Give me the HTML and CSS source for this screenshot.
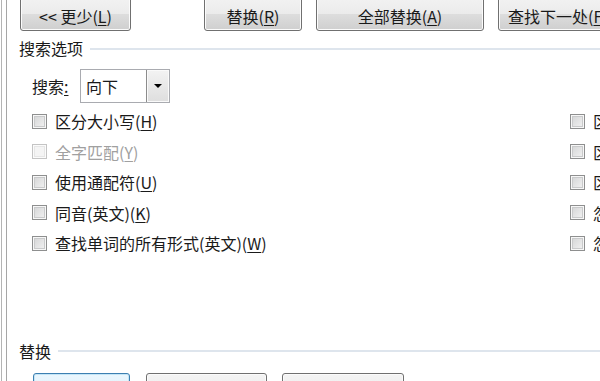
FILE: index.html
```html
<!DOCTYPE html>
<html lang="zh-CN">
<head>
<meta charset="utf-8">
<title>查找和替换</title>
<link rel="stylesheet" href="styles.css">
</head>
<body>
<div class="frame">
  <div class="panel">
    <div class="top-buttons">
      <button class="btn btn-less">&lt;&lt; 更少(<u>L</u>)</button>
      <button class="btn btn-replace">替换(<u>R</u>)</button>
      <button class="btn btn-all">全部替换(<u>A</u>)</button>
      <button class="btn btn-next">查找下一处(<u>F</u>)</button>
    </div>

    <div class="group-title">
      <span class="group-label">搜索选项</span>
      <span class="group-line"></span>
    </div>

    <div class="search-row">
      <span class="search-label">搜索<u>:</u></span>
      <div class="combo">
        <span class="combo-value">向下</span>
        <span class="combo-arrow"><span class="tri"></span></span>
      </div>
    </div>

    <div class="options">
      <div class="col col-left">
        <label class="opt"><span class="cb"></span><span>区分大小写(<u>H</u>)</span></label>
        <label class="opt disabled"><span class="cb"></span><span>全字匹配(<u>Y</u>)</span></label>
        <label class="opt"><span class="cb"></span><span>使用通配符(<u>U</u>)</span></label>
        <label class="opt"><span class="cb"></span><span>同音(英文)(<u>K</u>)</span></label>
        <label class="opt"><span class="cb"></span><span>查找单词的所有形式(英文)(<u>W</u>)</span></label>
      </div>
      <div class="col col-right">
        <label class="opt"><span class="cb"></span><span>区分前缀(<u>X</u>)</span></label>
        <label class="opt"><span class="cb"></span><span>区分后缀(<u>T</u>)</span></label>
        <label class="opt"><span class="cb"></span><span>区分全/半角(<u>M</u>)</span></label>
        <label class="opt"><span class="cb"></span><span>忽略标点符号(<u>S</u>)</span></label>
        <label class="opt"><span class="cb"></span><span>忽略空格(<u>W</u>)</span></label>
      </div>
    </div>

    <div class="group-title replace-title">
      <span class="group-label">替换</span>
      <span class="group-line"></span>
    </div>

    <div class="bottom-buttons">
      <button class="btn btn-focus btn-b1">格式(<u>O</u>) ▾</button>
      <button class="btn btn-b2">特殊格式(<u>E</u>) ▾</button>
      <button class="btn btn-b3">不限定格式(<u>T</u>)</button>
    </div>
  </div>
</div>
</body>
</html>
```

FILE: styles.css
```css
html, body {
  margin: 0;
  padding: 0;
  background: #ffffff;
}
body {
  width: 600px;
  height: 381px;
  overflow: hidden;
  font-family: "Noto Sans CJK SC", "Noto Sans", sans-serif;
  font-size: 16px;
  color: #1a1a1a;
}
u { text-decoration: underline; text-underline-offset: 2px; }

.frame {
  margin-left: 1px;
  border-left: 1px solid #b4b4b4;
  height: 381px;
  overflow: hidden;
}
.panel {
  margin-left: 4px;
  border-left: 1px solid #a6a6a6;
  height: 381px;
  display: flex;
  flex-direction: column;
  width: 594px;
  overflow: hidden;
}

/* buttons */
.btn {
  font: inherit;
  color: #1a1a1a;
  border: 1px solid #707070;
  border-radius: 3px;
  background: linear-gradient(#f2f2f2 0%, #ebebeb 50%, #dddddd 51%, #cfcfcf 100%);
  box-shadow: inset 0 0 0 1px #fbfbfb;
  padding: 0;
  white-space: nowrap;
  flex: none;
}
.top-buttons {
  display: flex;
  margin-top: -3px;
  height: 34px;
}
.top-buttons .btn { height: 34px; padding-top: 3px; line-height: 20px; }
.btn-less { margin-left: 13px; width: 111px; }
.btn-replace { margin-left: 73px; width: 98px; }
.btn-all { margin-left: 14px; width: 168px; }
.top-buttons .btn-next { margin-left: 14px; width: 140px; text-align: left; padding-left: 9px; }

/* group titles */
.group-title {
  display: flex;
  align-items: center;
  padding-left: 12px;
  height: 20px;
  margin-top: 7px;
}
.group-label { flex: none; line-height: 20px; }
.group-line {
  flex: 1;
  height: 2px;
  background: #dee5ed;
  margin-left: 7px;
  margin-top: 1px;
}

/* search row */
.search-row {
  display: flex;
  align-items: center;
  margin-top: 11px;
  padding-left: 25px;
  height: 34px;
}
.search-label { width: 48px; flex: none; }
.combo {
  display: flex;
  width: 90px;
  height: 34px;
  box-sizing: border-box;
  border: 1px solid #a9abb0;
  background: #fff;
}
.combo-value {
  flex: 1;
  padding-left: 5px;
  line-height: 32px;
}
.combo-arrow {
  width: 22px;
  border-left: 1px solid #8c8c8c;
  background: linear-gradient(#f3f3f3, #dedede);
  box-shadow: inset 0 0 0 1px #fafafa;
  display: flex;
  align-items: center;
  justify-content: center;
}
.tri {
  width: 0;
  height: 0;
  border-left: 4px solid transparent;
  border-right: 4px solid transparent;
  border-top: 4px solid #000;
}

/* options */
.options {
  display: flex;
  margin-top: 3px;
  padding-left: 25px;
}
.col { display: flex; flex-direction: column; }
.col-left { width: 538px; flex: none; }
.col-right { flex: none; }
.opt {
  display: flex;
  align-items: center;
  height: 30.5px;
  white-space: nowrap;
}
.cb {
  width: 13px;
  height: 13px;
  border: 1px solid #8e8f8f;
  background: linear-gradient(135deg, #d2d3d4, #f4f4f4);
  box-shadow: inset 0 0 0 1px #f7f7f7, inset 0 0 0 2px #c9cacb;
  margin-right: 8px;
  flex: none;
}
.opt.disabled { color: #a0a0a0; }
.opt.disabled .cb {
  border-color: #c4c4c4;
  background: #f4f4f4;
  box-shadow: inset 0 0 0 1px #fbfbfb, inset 0 0 0 2px #e6e6e6;
}

.replace-title { margin-top: 82px; }

/* bottom buttons */
.bottom-buttons {
  display: flex;
  margin-top: 12px;
  padding-left: 26px;
}
.bottom-buttons .btn {
  height: 34px;
  padding-top: 12px;
  background: linear-gradient(#f4f4f4, #e6e6e6);
}
.btn-b1 { width: 97px; }
.btn-b2 { width: 121px; margin-left: 16px; }
.btn-b3 { width: 122px; margin-left: 15px; }
.bottom-buttons .btn-focus {
  border-color: #3c7fb1;
  background: linear-gradient(#eaf6fd, #d9effc);
  box-shadow: inset 0 0 0 1px #c4e5f6;
}
```
